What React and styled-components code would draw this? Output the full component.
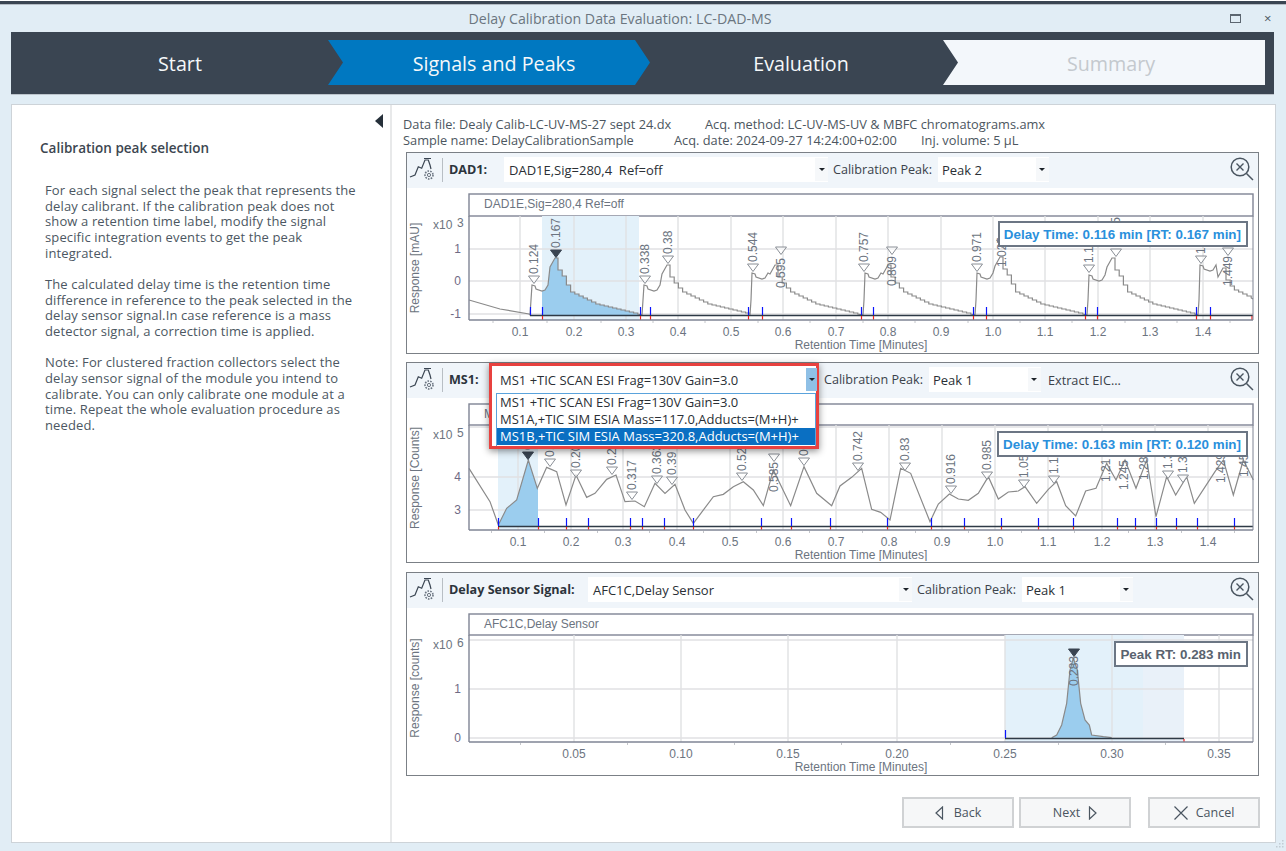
import React from "react";
import styled, { createGlobalStyle } from "styled-components";

const GlobalStyle = createGlobalStyle`
  html, body {
    margin: 0;
    padding: 0;
    background: #fff;
  }
`;

const UI_FONT = `"Open Sans", "Noto Sans", sans-serif`;
const CHART_FONT = `"Liberation Sans", Arial, sans-serif`;

const Window = styled.div`
  position: relative;
  width: 1286px;
  height: 851px;
  overflow: hidden;
  display: flex;
  flex-direction: column;
  background: #e1edf5;
  font-family: ${UI_FONT};
`;

const TopStrip = styled.div`
  height: 3px;
  border-top: 1px solid #fff;
  border-bottom: 1px solid #b4bcc4;
  background: #3a4552;
  flex-shrink: 0;
`;

const TitleBar = styled.div`
  height: 27px;
  flex-shrink: 0;
  display: flex;
  align-items: center;
`;

const Title = styled.div`
  width: 1230px;
  padding-left: 10px;
  box-sizing: border-box;
  text-align: center;
  font-size: 14.2px;
  color: #6b7680;
`;

const MaxButton = styled.div`
  width: 9px;
  height: 6px;
  border: 1px solid #5c6670;
  border-top-width: 2px;
`;

const CloseButton = styled.div`
  margin-left: 23px;
  font-size: 13px;
  line-height: 13px;
  color: #4c5660;
`;

const Banner = styled.div`
  height: 45px;
  width: 1254px;
  margin-left: 11px;
  padding: 8px 9px 9px 0;
  box-sizing: content-box;
  flex-shrink: 0;
  display: flex;
  background: #3a4552;
  border-bottom: 1px solid #bcc4cc;
`;

const Step = styled.div`
  width: ${p => p.$w}px;
  padding: 2px 0 0 ${p => p.$pad}px;
  box-sizing: border-box;
  display: flex;
  align-items: center;
  justify-content: center;
  font-size: 19.7px;
  color: ${p => (p.$kind === "todo" ? "#c4c9ce" : "#f5f8fa")};
  background: ${p =>
    p.$kind === "active" ? "#0078c1" : p.$kind === "todo" ? "#f3f7fb" : "transparent"};
  clip-path: ${p =>
    p.$kind === "active"
      ? "polygon(0 0, calc(100% - 15px) 0, 100% 50%, calc(100% - 15px) 100%, 0 100%, 15px 50%)"
      : p.$kind === "todo"
      ? "polygon(0 0, 100% 0, 100% 100%, 0 100%, 15px 50%)"
      : "none"};
`;

const Body = styled.div`
  margin: 9px 0 0 11px;
  width: 1263px;
  height: 737px;
  flex-shrink: 0;
  display: flex;
  background: #fff;
  border: 1px solid #cdd3d8;
`;

const Sidebar = styled.div`
  width: 378px;
  flex-shrink: 0;
  display: flex;
  flex-direction: column;
  border-right: 2px solid #e8e9ea;
`;

const CollapseArrow = styled.div`
  width: 0;
  height: 0;
  margin: 9px 7px 0 auto;
  border-top: 7px solid transparent;
  border-bottom: 7px solid transparent;
  border-right: 8px solid #26303a;
`;

const SideHeading = styled.div`
  margin: 10px 0 0 28px;
  line-height: 20px;
  font-size: 13.5px;
  font-weight: 600;
  color: #3c4650;
`;

const SideText = styled.div`
  margin: 25px 0 0 33px;
  font-size: 13px;
  letter-spacing: 0.12px;
  line-height: 15.67px;
  white-space: pre-line;
  color: #4c5762;
`;

const Content = styled.div`
  flex: 1;
  padding: 11px 0 0 11px;
`;

const InfoRow = styled.div`
  display: flex;
  height: 16px;
  line-height: 16px;
  font-size: 12.8px;
  color: #4c5660;
`;

const InfoItem = styled.div`
  width: ${p => p.$w}px;
  flex-shrink: 0;
  white-space: nowrap;
`;

const Panel = styled.div`
  position: relative;
  width: 851px;
  height: ${p => p.$h}px;
  margin: ${p => p.$top}px 0 0 3px;
  border: 1px solid #7b8086;
`;

const PanelHeader = styled.div`
  position: relative;
  z-index: 2;
  height: 35px;
  box-sizing: border-box;
  display: flex;
  align-items: center;
  background: #f0f5fa;
  padding: 0 0 2px 2px;
`;

const HeaderDivider = styled.div`
  width: 1px;
  height: 24px;
  margin: 0 6px 0 5px;
  background: #b8bec4;
`;

const SignalLabel = styled.div`
  width: ${p => p.$w}px;
  flex-shrink: 0;
  font-size: 12.6px;
  font-weight: 700;
  color: #2c343c;
  white-space: nowrap;
`;

const Combo = styled.div`
  position: relative;
  z-index: 2;
  width: ${p => p.$w}px;
  height: 25px;
  flex-shrink: 0;
  box-sizing: border-box;
  padding-left: ${p => p.$pad || 5}px;
  display: flex;
  align-items: center;
  background: #fff;
  font-size: 13px;
  color: #2a2f35;
  white-space: pre;
`;

const ComboButton = styled.div`
  position: absolute;
  right: ${p => (p.$open ? 1 : 0)}px;
  top: 1px;
  bottom: 1px;
  width: ${p => (p.$open ? 11 : 13)}px;
  display: flex;
  align-items: center;
  justify-content: center;
  background: ${p => (p.$open ? "#8fc0e6" : "#f6f8fa")};

  &::after {
    content: "";
    border-top: 3px solid #1c2228;
    border-left: 3px solid transparent;
    border-right: 3px solid transparent;
  }
`;

const FieldLabel = styled.div`
  margin: 0 6px 0 ${p => p.$left || 5}px;
  font-size: 12.6px;
  color: #3a424a;
  white-space: nowrap;
`;

const ExtractLink = styled.div`
  margin-left: 7px;
  font-size: 12.7px;
  color: #3a424a;
`;

const LensSlot = styled.div`
  margin-left: auto;
  margin-right: 4px;
  display: flex;
`;

const RedFrame = styled.div`
  position: absolute;
  z-index: -1;
  left: -1px;
  top: -4px;
  width: 330px;
  height: 86px;
  box-sizing: border-box;
  background: #fff;
  border: 3px solid #e8413f;
  box-shadow: 0 2px 7px rgba(0, 0, 0, 0.45);
`;

const DropList = styled.div`
  position: absolute;
  z-index: 1;
  left: 6px;
  top: 26px;
  width: 320px;
  height: 53px;
  box-sizing: border-box;
  background: #fff;
  border: 1px solid #5aa3dc;
  border-bottom: none;
`;

const DropItem = styled.div`
  height: 17px;
  line-height: 17px;
  padding-left: 3px;
  font-size: 13px;
  color: ${p => (p.$selected ? "#fff" : "#2a2f35")};
  background: ${p => (p.$selected ? "#0a6fc2" : "transparent")};
`;

const ChartBody = styled.div`
  position: relative;
  height: ${p => p.$h}px;
`;

const ChartSvg = styled.svg`
  display: block;
`;

const ResultTag = styled.div`
  position: absolute;
  right: 10px;
  top: 33px;
  height: 26px;
  box-sizing: border-box;
  padding: 0 5px 0 4px;
  display: flex;
  align-items: center;
  background: #fff;
  border: 2px solid #6c7684;
  font-family: ${CHART_FONT};
  font-size: 13.4px;
  font-weight: 700;
  color: ${p => (p.$plain ? "#59636f" : "#2a90dc")};
  white-space: nowrap;
`;

const Footer = styled.div`
  width: 854px;
  margin: 21px 0 0 3px;
  display: flex;
  justify-content: flex-end;
`;

const WizardButton = styled.div`
  width: 112px;
  height: 31px;
  box-sizing: border-box;
  margin-left: ${p => p.$gap}px;
  display: flex;
  align-items: center;
  justify-content: center;
  gap: ${p => p.$inner || 8}px;
  background: #f6f7f8;
  border: 2px solid #d0d2d4;
  font-size: 12.5px;
  color: #4a5560;
`;

const ResizeGrip = styled.svg`
  position: absolute;
  right: 0;
  bottom: 0;
`;

const AxisText = styled.text`
  font-family: ${CHART_FONT};
  font-size: 12px;
  fill: ${p => p.$fill || "#6c7480"};
`;

const SIDE_TEXT = `For each signal select the peak that represents the
delay calibrant. If the calibration peak does not
show a retention time label, modify the signal
specific integration events to get the peak
integrated.

The calculated delay time is the retention time
difference in reference to the peak selected in the
delay sensor signal.In case reference is a mass
detector signal, a correction time is applied.

Note: For clustered fraction collectors select the
delay sensor signal of the module you intend to
calibrate. You can only calibrate one module at a
time. Repeat the whole evaluation procedure as
needed.`;

// [page x, triangle top, label, text start y (optional), filled]
const DAD_PEAKS = [
  [534, 276, "0.124"],
  [556, 250, "0.167", 248, true],
  [645, 276, "0.338"],
  [668, 256, "0.38"],
  [753, 264, "0.544"],
  [781, 247, "0.595", 288],
  [864, 264, "0.757"],
  [892, 247, "0.809", 286],
  [977, 264, "0.971"],
  [1002, 240, "1.025", 267],
  [1089, 265, "1.18"],
  [1116, 249, "1.235"],
  [1201, 256, "1.39"],
  [1228, 248, "1.449", 286]
];

const MS_PEAKS = [
  [528, 452, "0.120", 450, true],
  [550, 459, "0.161"],
  [576, 470, "0.209"],
  [612, 467, "0.276"],
  [632, 492, "0.317"],
  [657, 476, "0.363"],
  [672, 477, "0.39"],
  [742, 473, "0.523"],
  [774, 454, "0.585", 492],
  [804, 458, "0.638"],
  [858, 463, "0.742"],
  [905, 463, "0.83"],
  [951, 486, "0.916"],
  [987, 472, "0.985"],
  [1024, 480, "1.05"],
  [1054, 476, "1.11"],
  [1106, null, "1.21", 482],
  [1124, null, "1.245", 490],
  [1144, null, "1.28", 480],
  [1168, 471, "1.32"],
  [1183, 475, "1.36"],
  [1221, null, "1.429", 483],
  [1244, null, "1.45", 477]
];

const DELAY_PEAKS = [[1074, 649, "0.283", 686, true]];

const lerp = (pts, x) => {
  for (let i = 1; i < pts.length; i++) {
    if (x <= pts[i][0]) {
      const [x0, y0] = pts[i - 1];
      const [x1, y1] = pts[i];
      return y0 + ((y1 - y0) * (x - x0)) / (x1 - x0 || 1);
    }
  }
  return pts[pts.length - 1][1];
};

const area = (pts, from, to, base) => {
  const inner = pts.filter(p => p[0] > from && p[0] < to);
  return [[from, base], [from, lerp(pts, from)], ...inner, [to, lerp(pts, to)], [to, base]];
};

const toStr = pts => pts.map(p => p.join(",")).join(" ");

// one chromatogram cycle of the DAD trace, made stair shaped like the low res data
const dadCycle = (start, first, second) => {
  const f = first;
  const s = second;
  const tail = [[30, s + 15], [35, s + 22], [38, 290], [50, 297], [63, 303], [83, 308], [103, 313], [111.5, 315]];
  const out = [
    [start, 315],
    [start + 1, 300],
    [start + 2, f],
    [start + 5, f + 1],
    [start + 6, f + 4],
    [start + 12, f + 6],
    [start + 15, f + 5],
    [start + 18, f],
    [start + 20, s + 9],
    [start + 25, s],
    [start + 27, s]
  ];
  let prev = out[out.length - 1][1];
  for (let dx = 28; dx < 111; dx += 4.2) {
    const y = lerp(tail.map(t => [start + t[0], t[1]]), start + dx);
    const snapped = Math.round(y);
    out.push([start + dx, prev]);
    out.push([start + dx, snapped]);
    prev = snapped;
  }
  return out;
};

const DAD_TRACE = [
  [469, 300],
  [500, 309],
  [529, 314],
  ...dadCycle(530, 285, 258),
  ...dadCycle(642, 285, 265),
  ...dadCycle(750, 273, 265),
  ...dadCycle(863, 273, 265),
  ...dadCycle(975, 273, 257),
  ...dadCycle(1087, 275, 258),
  ...dadCycle(1198, 265, 268).filter(p => p[0] < 1253),
  [1253, 299]
];

const MS_TRACE = [
  ...[
    [207, 325], [270, 425], [295, 495], [320, 445], [350, 420], [385, 300], [412, 385], [440, 322],
    [470, 335], [498, 435], [528, 345], [560, 412], [585, 400], [620, 358], [648, 345], [675, 425],
    [705, 423], [733, 440], [765, 370], [795, 400], [825, 373], [855, 450], [880, 490], [940, 410],
    [970, 403], [1000, 380], [1030, 365], [1060, 390], [1090, 437], [1120, 330], [1172, 437],
    [1212, 320], [1250, 400], [1295, 437]
  ].map(([x, y]) => [400 + x / 3, 360 + y / 3]),
  ...[
    [0, 378], [35, 352], [65, 325], [95, 448], [122, 457], [150, 480], [182, 325], [212, 340],
    [270, 485], [295, 432], [328, 402], [355, 417], [385, 421], [415, 400], [445, 350], [475, 417],
    [505, 396], [535, 393], [555, 380], [590, 430], [625, 388], [650, 365], [677, 437], [707, 468],
    [737, 393], [768, 385], [800, 310], [828, 360], [855, 300], [888, 385], [920, 300], [948, 470],
    [980, 350], [1007, 405], [1040, 350], [1063, 430], [1125, 335], [1150, 300], [1180, 405],
    [1210, 300], [1240, 360]
  ].map(([x, y]) => [840 + x / 3, 360 + y / 3])
];

const DELAY_TRACE = [
  [635, 503], [650, 495], [665, 465], [680, 400], [690, 300], [700, 265], [712, 300], [722, 400],
  [735, 450], [748, 465], [755, 495], [790, 500], [815, 503]
].map(([x, y]) => [840 + x / 3, 570 + y / 3]);

const decimals = [0.1, 0.2, 0.3, 0.4, 0.5, 0.6, 0.7, 0.8, 0.9, 1.0, 1.1, 1.2, 1.3, 1.4].map(v => v.toFixed(1));

const CHARTS = {
  dad: {
    originY: 188,
    height: 164,
    top: 194,
    sep: 216,
    bottom: 320,
    title: "DAD1E,Sig=280,4 Ref=off",
    yTitle: "Response [mAU]",
    yTitleMid: 268,
    exponent: "3",
    exponentY: 229,
    xs: [520, 574, 626, 678, 731, 783, 836, 888, 941, 993, 1045, 1098, 1150, 1203],
    xLabels: decimals,
    ys: [[249, "1"], [281, "0"], [314, "-1"]],
    selected: [[542, 639, "#e3f1fa"]],
    trace: DAD_TRACE,
    fill: area(DAD_TRACE, 542, 638, 315),
    base: [530, 1253, 315],
    ticks: [530, 542, 640, 650, 748, 762, 861, 873, 973, 986, 1085, 1097, 1196, 1210],
    noRed: [530],
    endRed: 1252,
    peaks: DAD_PEAKS
  },
  ms: {
    originY: 398,
    height: 163,
    top: 404,
    sep: 425,
    bottom: 530,
    title: "M",
    yTitle: "Response [Counts]",
    yTitleMid: 478,
    exponent: "5",
    exponentY: 439,
    xs: [518, 571, 623, 677, 730, 783, 836, 889, 942, 995, 1048, 1102, 1155, 1208],
    xLabels: decimals,
    ys: [[477, "4"], [510, "3"]],
    topLine: 427,
    selected: [[498, 538, "#e3f1fa"]],
    trace: MS_TRACE,
    fill: area(MS_TRACE, 498, 538, 526),
    base: [498, 1253, 526],
    ticks: [498, 538, 566, 588, 630, 642, 664, 693, 761, 791, 830, 887, 931, 964, 1001, 1038, 1073, 1117, 1135, 1156, 1176, 1197, 1234],
    noRed: [],
    peaks: MS_PEAKS
  },
  delay: {
    originY: 608,
    height: 166,
    top: 614,
    sep: 635,
    bottom: 742,
    title: "AFC1C,Delay Sensor",
    yTitle: "Response [counts]",
    yTitleMid: 688,
    exponent: "6",
    exponentY: 649,
    xs: [574, 681, 788, 897, 1005, 1112, 1219],
    xLabels: ["0.05", "0.10", "0.15", "0.20", "0.25", "0.30", "0.35"],
    ys: [[689, "1"], [738, "0"]],
    topLine: 640,
    selected: [[1005, 1143, "#e3f1fa"], [1143, 1184, "#e9f1f9"]],
    trace: DELAY_TRACE,
    fill: DELAY_TRACE,
    base: [1005, 1184, 738],
    ticks: [],
    blueOnly: [1005],
    endRed: 1184,
    peaks: DELAY_PEAKS
  }
};

function PeakMark({ x, tri, label, textY, filled }) {
  const start = textY || tri - 2;
  return (
    <g>
      {tri !== null && (
        <path
          d={`M${x - 5.5} ${tri} H${x + 5.5} L${x} ${tri + 7.5} Z`}
          fill={filled ? "#3a4552" : "#fff"}
          fillOpacity={filled ? 1 : 0.6}
          stroke={filled ? "#3a4552" : "#8a8f96"}
        />
      )}
      <AxisText
        x={x}
        y={start}
        dominantBaseline="central"
        transform={`rotate(-90 ${x} ${start})`}
      >
        {label}
      </AxisText>
    </g>
  );
}

function Chart({ name }) {
  const c = CHARTS[name];
  const left = 469;
  const right = 1253;
  const step = c.xs[1] - c.xs[0];
  const baseY = c.base[2] + 0.5;
  const minors = [c.xs[0] - step / 2, ...c.xs.map(x => x + step / 2)].filter(x => x > left && x < right);
  return (
    <ChartSvg width="851" height={c.height} viewBox={`407 ${c.originY} 851 ${c.height}`}>
      <rect x={left} y={c.top} width={right - left} height={c.sep - c.top} fill="#fff" stroke="#7f8494" strokeWidth="1.4" />
      <AxisText x="484" y={c.top + 14}>{c.title}</AxisText>
      {c.selected.map(([a, b, col]) => (
        <rect key={a} x={a} y={c.sep} width={b - a} height={c.bottom - c.sep} fill={col} />
      ))}
      {c.xs.map(x => (
        <line key={x} x1={x} x2={x} y1={c.sep} y2={c.bottom} stroke="#e0e1e3" strokeWidth="1.4" />
      ))}
      {c.ys.map(([y]) => (
        <line key={y} x1={left} x2={right} y1={y} y2={y} stroke="#e0e1e3" strokeWidth="1.4" />
      ))}
      {c.topLine && <line x1={left} x2={right} y1={c.topLine} y2={c.topLine} stroke="#e0e1e3" strokeWidth="1.4" />}
      <polygon points={toStr(c.fill)} fill="#9bcdee" />
      <polyline points={toStr(c.trace)} fill="none" stroke="#8a8a8a" strokeWidth="1.2" />
      <line x1={c.base[0]} x2={c.base[1]} y1={baseY} y2={baseY} stroke="#2e3a46" strokeWidth="1.5" />
      {c.ticks.map(x => (
        <g key={x}>
          <line x1={x + 0.5} x2={x + 0.5} y1={c.base[2] - 8} y2={c.base[2]} stroke="#0a14ff" strokeWidth="1.2" />
          {!c.noRed.includes(x) && (
            <line x1={x + 0.5} x2={x + 0.5} y1={c.base[2] + 1} y2={c.bottom} stroke="#f02020" strokeWidth="1.2" />
          )}
        </g>
      ))}
      {(c.blueOnly || []).map(x => (
        <line key={x} x1={x + 0.5} x2={x + 0.5} y1={c.base[2] - 8} y2={c.base[2]} stroke="#0a14ff" strokeWidth="1.2" />
      ))}
      {c.endRed && (
        <line x1={c.endRed} x2={c.endRed} y1={c.base[2] + 1} y2={c.bottom} stroke="#f02020" strokeWidth="1.2" />
      )}
      {c.peaks.map(([x, tri, label, textY, filled]) => (
        <PeakMark key={label} x={x} tri={tri} label={label} textY={textY} filled={filled} />
      ))}
      <line x1={left} x2={right} y1={c.bottom} y2={c.bottom} stroke="#7f8494" strokeWidth="1.4" />
      <line x1={left} x2={left} y1={c.sep} y2={c.bottom} stroke="#7f8494" strokeWidth="1.4" />
      <line x1={right} x2={right} y1={c.sep} y2={c.bottom} stroke="#7f8494" strokeWidth="1" />
      {minors.map(x => (
        <line key={x} x1={x} x2={x} y1={c.bottom + 1} y2={c.bottom + 3} stroke="#c4c6ca" />
      ))}
      {c.xs.map((x, i) => (
        <AxisText key={x} x={x} y={c.bottom + 16} textAnchor="middle">{c.xLabels[i]}</AxisText>
      ))}
      {c.ys.map(([y, label]) => (
        <AxisText key={y} x="461" y={y + 4} textAnchor="end" $fill="#6f6a85">{label}</AxisText>
      ))}
      <AxisText x="433" y={c.exponentY}>x10</AxisText>
      <AxisText x="457" y={c.exponentY - 2}>{c.exponent}</AxisText>
      <AxisText
        x="415"
        y={c.yTitleMid}
        textAnchor="middle"
        dominantBaseline="central"
        transform={`rotate(-90 415 ${c.yTitleMid})`}
      >
        {c.yTitle}
      </AxisText>
      <AxisText x="861" y={c.bottom + 29} textAnchor="middle">Retention Time [Minutes]</AxisText>
    </ChartSvg>
  );
}

function SignalIcon() {
  return (
    <svg width="28" height="28" viewBox="0 0 28 28" fill="none">
      <polyline points="1,21 6,19 9.3,10.7 12.7,12.3 16,4 19.3,4 21,9 22,13" stroke="#3a4552" strokeWidth="1.2" />
      <line x1="15" x2="22" y1="2.5" y2="2.5" stroke="#3a4552" />
      <circle cx="20" cy="19" r="1.6" stroke="#6a7480" />
      <circle cx="20" cy="19" r="4" stroke="#6a7480" strokeWidth="1.6" strokeDasharray="1.6 1.2" />
    </svg>
  );
}

function ZoomResetIcon() {
  return (
    <svg width="24" height="25" viewBox="0 0 24 25" fill="none" stroke="#4a5560">
      <circle cx="10" cy="10" r="8.8" strokeWidth="1.5" />
      <path d="M6.5 6.5 L13.5 13.5 M13.5 6.5 L6.5 13.5" strokeWidth="1.4" />
      <path d="M16.5 16.5 L23 23" strokeWidth="1.5" />
    </svg>
  );
}

function App() {
  return (
    <Window>
      <GlobalStyle />
      <TopStrip />
      <TitleBar>
        <Title>Delay Calibration Data Evaluation: LC-DAD-MS</Title>
        <MaxButton />
        <CloseButton>×</CloseButton>
      </TitleBar>
      <Banner>
        <Step $w={317} $pad={21}>Start</Step>
        <Step $w={322} $pad={10} $kind="active">Signals and Peaks</Step>
        <Step $w={293} $pad={9}>Evaluation</Step>
        <Step $w={322} $pad={14} $kind="todo">Summary</Step>
      </Banner>
      <Body>
        <Sidebar>
          <CollapseArrow />
          <SideHeading>Calibration peak selection</SideHeading>
          <SideText>{SIDE_TEXT}</SideText>
        </Sidebar>
        <Content>
          <InfoRow>
            <InfoItem $w={302}>Data file: Dealy Calib-LC-UV-MS-27 sept 24.dx</InfoItem>
            <InfoItem $w={340}>Acq. method: LC-UV-MS-UV &amp; MBFC chromatograms.amx</InfoItem>
          </InfoRow>
          <InfoRow>
            <InfoItem $w={271}>Sample name: DelayCalibrationSample</InfoItem>
            <InfoItem $w={247}>Acq. date: 2024-09-27 14:24:00+02:00</InfoItem>
            <InfoItem $w={100}>Inj. volume: 5 µL</InfoItem>
          </InfoRow>

          <Panel $h={200} $top={4}>
            <PanelHeader>
              <SignalIcon />
              <HeaderDivider />
              <SignalLabel $w={55}>DAD1:</SignalLabel>
              <Combo $w={324}>
                {"DAD1E,Sig=280,4  Ref=off"}
                <ComboButton />
              </Combo>
              <FieldLabel>Calibration Peak:</FieldLabel>
              <Combo $w={111} $pad={4}>
                Peak 2
                <ComboButton />
              </Combo>
              <LensSlot><ZoomResetIcon /></LensSlot>
            </PanelHeader>
            <ChartBody $h={164}>
              <Chart name="dad" />
              <ResultTag>Delay Time: 0.116 min [RT: 0.167 min]</ResultTag>
            </ChartBody>
          </Panel>

          <Panel $h={199} $top={8}>
            <PanelHeader>
              <SignalIcon />
              <HeaderDivider />
              <SignalLabel $w={41}>MS1:</SignalLabel>
              <Combo $w={328} $pad={10}>
                <RedFrame />
                MS1 +TIC SCAN ESI Frag=130V Gain=3.0
                <ComboButton $open />
                <DropList>
                  <DropItem>MS1 +TIC SCAN ESI Frag=130V Gain=3.0</DropItem>
                  <DropItem>MS1A,+TIC SIM ESIA Mass=117.0,Adducts=(M+H)+</DropItem>
                  <DropItem $selected>MS1B,+TIC SIM ESIA Mass=320.8,Adducts=(M+H)+</DropItem>
                </DropList>
              </Combo>
              <FieldLabel $left={6}>Calibration Peak:</FieldLabel>
              <Combo $w={112} $pad={4}>
                Peak 1
                <ComboButton />
              </Combo>
              <ExtractLink>Extract EIC...</ExtractLink>
              <LensSlot><ZoomResetIcon /></LensSlot>
            </PanelHeader>
            <ChartBody $h={163}>
              <Chart name="ms" />
              <ResultTag>Delay Time: 0.163 min [RT: 0.120 min]</ResultTag>
            </ChartBody>
          </Panel>

          <Panel $h={202} $top={9}>
            <PanelHeader>
              <SignalIcon />
              <HeaderDivider />
              <SignalLabel $w={139}>Delay Sensor Signal:</SignalLabel>
              <Combo $w={324}>
                AFC1C,Delay Sensor
                <ComboButton />
              </Combo>
              <FieldLabel>Calibration Peak:</FieldLabel>
              <Combo $w={111} $pad={4}>
                Peak 1
                <ComboButton />
              </Combo>
              <LensSlot><ZoomResetIcon /></LensSlot>
            </PanelHeader>
            <ChartBody $h={166}>
              <Chart name="delay" />
              <ResultTag $plain>Peak RT: 0.283 min</ResultTag>
            </ChartBody>
          </Panel>

          <Footer>
            <WizardButton $gap={0} $inner={10}>
              <svg width="9" height="14" viewBox="0 0 9 14" fill="none" stroke="#4a5560" strokeWidth="1.2">
                <path d="M7.5 1 V13 L1 7 Z" />
              </svg>
              Back
            </WizardButton>
            <WizardButton $gap={5}>
              Next
              <svg width="9" height="14" viewBox="0 0 9 14" fill="none" stroke="#4a5560" strokeWidth="1.2">
                <path d="M1.5 1 V13 L8 7 Z" />
              </svg>
            </WizardButton>
            <WizardButton $gap={17}>
              <svg width="14" height="14" viewBox="0 0 14 14" fill="none" stroke="#4a5560" strokeWidth="1.2">
                <path d="M0.5 0.5 L13.5 13.5 M13.5 0.5 L0.5 13.5" />
              </svg>
              Cancel
            </WizardButton>
          </Footer>
        </Content>
      </Body>
      <ResizeGrip width="14" height="12" viewBox="0 0 14 12" fill="#c2ccd4">
        <rect x="10" y="1" width="1.5" height="1.5" />
        <rect x="7" y="4" width="1.5" height="1.5" />
        <rect x="10" y="4" width="1.5" height="1.5" />
        <rect x="4" y="7" width="1.5" height="1.5" />
        <rect x="7" y="7" width="1.5" height="1.5" />
        <rect x="10" y="7" width="1.5" height="1.5" />
      </ResizeGrip>
    </Window>
  );
}

export default App;
